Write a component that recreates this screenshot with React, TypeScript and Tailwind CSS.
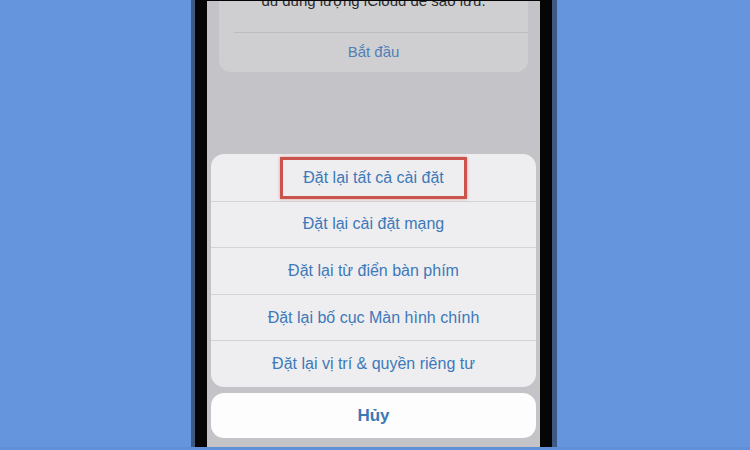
import React from 'react';

const options = [
  'Đặt lại tất cả cài đặt',
  'Đặt lại cài đặt mạng',
  'Đặt lại từ điển bàn phím',
  'Đặt lại bố cục Màn hình chính',
  'Đặt lại vị trí & quyền riêng tư',
];

export default function App() {
  return (
    <div
      className="w-[750px] h-[450px] bg-[#6595dc] overflow-hidden flex flex-col"
      style={{ fontFamily: '"Liberation Sans", Arial, sans-serif' }}
    >
      <div className="flex h-[447px]">
        {/* phone frame */}
        <div className="ml-[191px] w-[366px] h-full bg-[#3e5a82] pl-[4px] pr-[5px]">
          <div className="h-full bg-[#050505] px-[12px] pt-[1px]">
            <div className="h-full bg-[#c4c3c8] flex flex-col pl-[4px] pr-[4px]">
              {/* background card (dimmed) */}
              <div className="mx-[8px] h-[71px] bg-[#cfcfd2] rounded-b-[12px] flex flex-col">
                <div className="h-[31px] relative overflow-hidden">
                  <p className="absolute left-0 right-0 -top-[10px] text-center text-[15px] text-[#2a2a2c] leading-[20px]">
                    đủ dung lượng iCloud để sao lưu.
                  </p>
                </div>
                <div className="ml-[15px] h-px bg-[#bdbdc1]" />
                <div className="flex-1 flex items-center justify-center text-[15px] text-[#4f7fb5] pb-[1px]">
                  Bắt đầu
                </div>
              </div>

              <div className="h-[82px]" />

              {/* action sheet */}
              <div className="bg-[#eeeef0] rounded-[13px] overflow-hidden">
                {options.map((o, i) => (
                  <div
                    key={o}
                    className={`h-[46.6px] flex items-center justify-center text-[16px] text-[#3d79b9] ${
                      i > 0 ? 'border-t border-[#d3d3d6]' : ''
                    }`}
                  >
                    {i === 0 ? (
                      <span className="w-[187px] h-[42px] mt-[2px] border-[3px] border-[#c9534d] shadow-[0_0_3px_rgba(220,80,70,0.5)] flex items-center justify-center">
                        {o}
                      </span>
                    ) : (
                      o
                    )}
                  </div>
                ))}
              </div>

              <div className="h-[6px]" />

              <div className="h-[45px] bg-[#fdfdfd] rounded-[13px] flex items-center justify-center text-[17px] font-bold text-[#3d78b5]">
                Hủy
              </div>
            </div>
          </div>
        </div>
      </div>
      <div className="flex-1 bg-[#5f8fd6]" />
    </div>
  );
}
